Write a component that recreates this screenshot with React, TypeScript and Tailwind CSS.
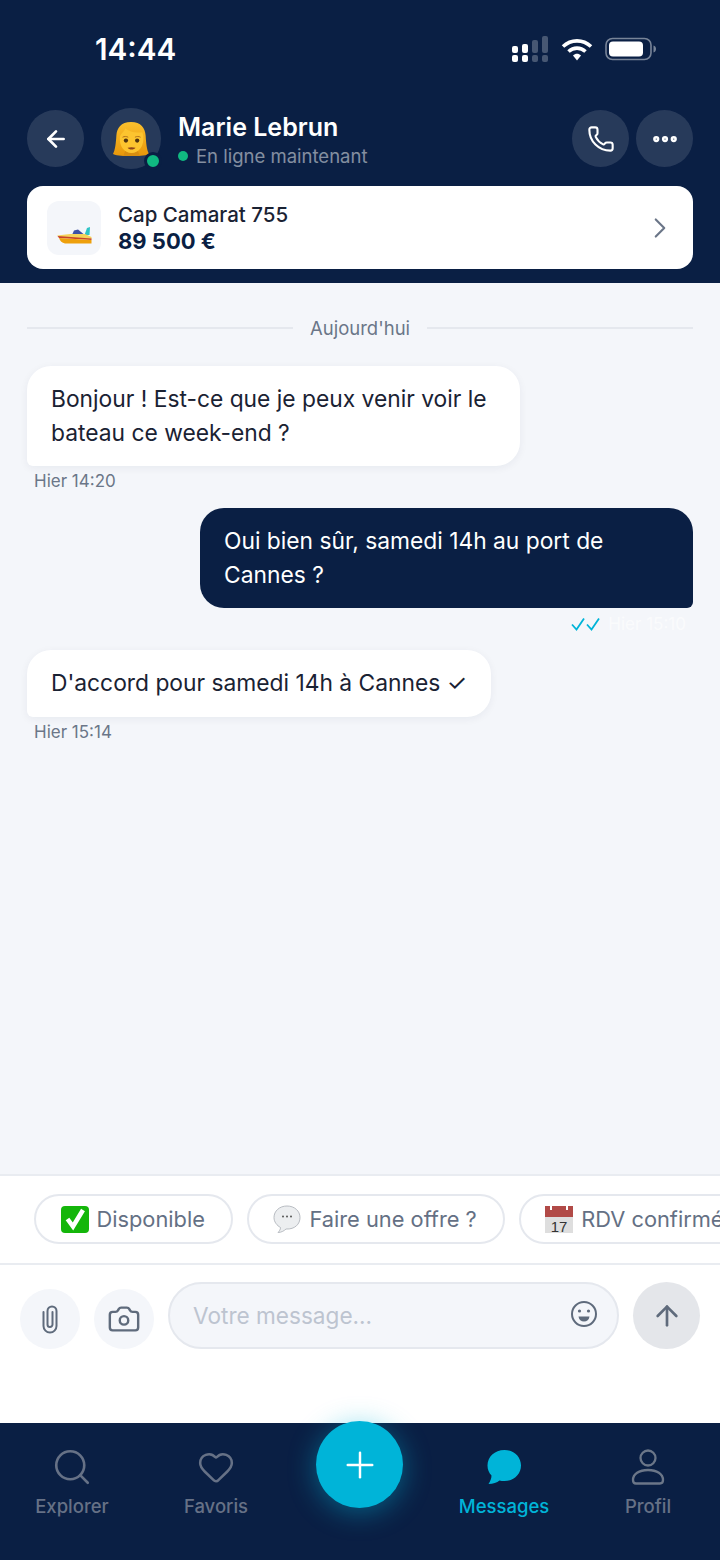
import { ArrowLeft, ArrowUp, Camera, ChevronRight, Ellipsis, Heart, Phone, Plus, Search } from "lucide-react";
import type { ReactNode } from "react";

function SignalIcon() {
  return (
    <svg width="37" height="26" viewBox="0 0 37 26" fill="#fff">
      <rect x="0" y="10" width="6" height="7" rx="2" />
      <rect x="0" y="19" width="6" height="7" rx="2" />
      <rect x="10" y="8" width="6" height="9" rx="2" />
      <rect x="10" y="19" width="6" height="7" rx="2" />
      <rect x="20" y="4" width="6" height="13" rx="2" opacity="0.25" />
      <rect x="20" y="19" width="6" height="7" rx="2" opacity="0.25" />
      <rect x="30" y="0" width="6" height="17" rx="2" opacity="0.25" />
      <rect x="30" y="19" width="6" height="7" rx="2" opacity="0.25" />
    </svg>
  );
}

function WifiIcon() {
  return (
    <svg width="32" height="24" viewBox="0 0 32 24" fill="none" stroke="#fff" strokeWidth="3.6">
      <path d="M2 9.500C10 2 22 2 30 9.500" />
      <path d="M7.500 14.500C12.500 10 19.500 10 24.500 14.500" />
      <path d="M12 18.400C14.400 16.200 17.600 16.200 20 18.400L16 23.500Z" fill="#fff" stroke="none" />
    </svg>
  );
}

function BatteryIcon() {
  return (
    <svg width="52" height="24" viewBox="0 0 52 24" fill="none">
      <rect x="1" y="1.500" width="45" height="21" rx="6.500" stroke="#fff" strokeOpacity="0.45" strokeWidth="1.600" />
      <rect x="4" y="4.500" width="34" height="15" rx="4" fill="#fff" />
      <path d="M48.500 8.500c1.600.4 2.500 1.800 2.500 3.500s-.9 3.100-2.500 3.500Z" fill="#fff" fillOpacity="0.45" />
    </svg>
  );
}

function WomanEmoji() {
  return (
    <svg width="36" height="34" viewBox="0 0 32 33" preserveAspectRatio="none">
      <defs>
        <linearGradient id="hair" x1="0" y1="0" x2="0" y2="1">
          <stop offset="0" stopColor="#fbc02d" />
          <stop offset="1" stopColor="#e8970a" />
        </linearGradient>
      </defs>
      <path d="M16 0C7 0 3.500 6 3 13 2.600 20 2 27 0 31 4 33 10 33 16 33S28 33 32 31C30 27 29.400 20 29 13 28.500 6 25 0 16 0Z" fill="url(#hair)" />
      <path d="M11 28H22L24 33H9Z" fill="#d98e10" />
      <path d="M6 16C6 24 10 30 16.500 30S27 24 27 16C27 13 26.500 11 26 10 20 11 14 9 11 6 10 10 6 11 6 16Z" fill="#fdc42f" />
      <path d="M8.500 14.800C10 13.800 12 13.800 13.500 14.800M19.500 14.800C21 13.800 23 13.800 24.500 14.800" fill="none" stroke="#a8661a" strokeWidth="0.800" />
      <ellipse cx="11.500" cy="18" rx="1.900" ry="2.100" fill="#4f3310" />
      <ellipse cx="21.500" cy="18" rx="1.900" ry="2.100" fill="#4f3310" />
      <path d="M13 25C15 24.300 18 24.300 20 25 19 27.300 14 27.300 13 25Z" fill="#8f4419" />
    </svg>
  );
}

function BoatEmoji() {
  return (
    <svg width="35" height="17" viewBox="0 0 35 17">
      <path d="M27.500 8L30 1 33 0 32.500 8Z" fill="#2fc4c6" />
      <path d="M15 8L17 3.500 21 2.500 26.500 7 27 8Z" fill="#3d51a6" />
      <path d="M0 8.500L13 7H28L34.500 10V12L3 10.500Z" fill="#f5d35a" />
      <path d="M0.500 9L34.500 11.500V13L2 11Z" fill="#c8442b" />
      <path d="M2 11L34.500 13V16.500H8C5 16 3 14 2 11Z" fill="#eea00c" />
    </svg>
  );
}

function CheckEmoji() {
  return (
    <svg width="28" height="27" viewBox="0 0 28 27" className="shrink-0">
      <rect width="28" height="27" rx="4" fill="#14b60a" />
      <path d="M6.500 13L12 20.500 22 4" fill="none" stroke="#fff" strokeWidth="4.500" />
    </svg>
  );
}

function BubbleEmoji() {
  return (
    <svg width="28" height="28" viewBox="0 0 28 28" className="shrink-0">
      <path d="M14 1C6.500 1 1 6 1 12.500 1 17 4 20.500 7.500 22.500 7.500 24.500 6.500 26 5 27.500 8.500 27.500 11.500 25.500 13 24 22 24.500 27 19 27 12.500 27 6 21.500 1 14 1Z" fill="#eceef0" stroke="#b8bcc2" strokeWidth="1" />
      <circle cx="10" cy="11.500" r="1" fill="#555" />
      <circle cx="14" cy="11.500" r="1" fill="#555" />
      <circle cx="18" cy="11.500" r="1" fill="#555" />
    </svg>
  );
}

function CalendarEmoji() {
  return (
    <svg width="28" height="28" viewBox="0 0 28 28" className="shrink-0">
      <rect y="1" width="28" height="27" fill="#dedede" />
      <rect y="1" width="28" height="11" fill="#b14a47" />
      <rect x="5" y="0" width="2" height="5" fill="#fff" />
      <rect x="21" y="0" width="2" height="5" fill="#fff" />
      <text x="14" y="26.500" textAnchor="middle" fontSize="15" fill="#333" fontFamily="Liberation Sans, sans-serif">17</text>
    </svg>
  );
}

function ClipIcon() {
  return (
    <svg width="16" height="29" viewBox="0 0 16 29" fill="none" stroke="#5f6b7c" strokeWidth="2" strokeLinecap="round">
      <path d="M10.500 7V19.500A2.500 2.500 0 0 1 5.500 19.500V6A4.500 4.500 0 0 1 14.500 6V21A6.500 6.500 0 0 1 1.500 21V7" />
    </svg>
  );
}

function SmileIcon() {
  return (
    <svg width="28" height="28" viewBox="0 0 28 28" fill="none" stroke="#5f6b7c" strokeWidth="2">
      <circle cx="14" cy="14" r="12" />
      <circle cx="9.500" cy="11" r="1.600" fill="#5f6b7c" stroke="none" />
      <circle cx="18.500" cy="11" r="1.600" fill="#5f6b7c" stroke="none" />
      <path d="M8.500 16.500H19.500C19 20 17 21.500 14 21.500S9 20 8.500 16.500Z" fill="#5f6b7c" stroke="none" />
    </svg>
  );
}

function MessagesIcon() {
  return (
    <svg width="36" height="36" viewBox="0 0 36 36" fill="#00b4d8">
      <path d="M18.500 1C8.500 1 1.500 8 1.500 16.500 1.500 20.500 3 24 5.500 26.500 5.500 29 4.500 32 2.500 35 7 35 11 33.500 13.500 31.500 15 32 16.500 32 18.500 32 28 32 35 25 35 16.500S28 1 18.500 1Z" />
    </svg>
  );
}

function ProfileIcon() {
  return (
    <svg width="34" height="36" viewBox="0 0 34 36" fill="none" stroke="#6b7688" strokeWidth="2.300">
      <ellipse cx="17" cy="9" rx="7.500" ry="7.500" />
      <path d="M2 31C2 25 8 21 17 21S32 25 32 31C32 33.500 31 34.500 29 34.500H5C3 34.500 2 33.500 2 31Z" />
    </svg>
  );
}

function RoundButton({ children, className }: { children: ReactNode; className: string }) {
  return <div className={`flex items-center justify-center rounded-full shrink-0 ${className}`}>{children}</div>;
}

function Chip({ icon, label }: { icon: ReactNode; label: string }) {
  return (
    <div className="flex h-[50px] shrink-0 items-center gap-[8px] rounded-full border-[2.5px] border-[#e5e8ee] bg-white pr-[26px] pl-[24.5px] text-[21.8px] whitespace-nowrap text-[#647084]">
      {icon}
      <span>{label}</span>
    </div>
  );
}

function NavItem({ icon, label, active }: { icon: ReactNode; label: string; active?: boolean }) {
  return (
    <div className="flex w-[144px] flex-col items-center gap-[9px]">
      <div className="flex h-[36px] items-center justify-center">{icon}</div>
      <span className={`text-[18.5px] leading-[24px] font-medium ${active ? "text-[#00b4d8]" : "text-[#667186]"}`}>{label}</span>
    </div>
  );
}

export default function App() {
  return (
    <div className="relative flex h-[1560px] w-[720px] flex-col overflow-hidden bg-[#f4f6fa] font-['Inter',sans-serif]">
      {/* Header */}
      <header className="h-[283px] shrink-0 bg-[#0a1f44] px-[27px]">
        <div className="flex h-[110px] items-start justify-between pt-[31px]">
          <span className="pl-[68px] text-[29.7px] leading-[36px] font-semibold text-white">14:44</span>
          <div className="flex items-center gap-[12px] pt-[5px] pr-[36px]">
            <SignalIcon />
            <WifiIcon />
            <BatteryIcon />
          </div>
        </div>
        <div className="flex h-[57px] items-center">
          <RoundButton className="h-[57px] w-[57px] bg-white/12">
            <ArrowLeft size={26} color="#fff" strokeWidth={2.500} />
          </RoundButton>
          <div className="relative ml-[17px]">
            <RoundButton className="h-[61px] w-[60px] bg-white/12">
              <WomanEmoji />
            </RoundButton>
            <span className="absolute right-[-1px] bottom-[-1px] h-[18px] w-[18px] rounded-full border-[3px] border-[#0a1f44] bg-[#10b981]" />
          </div>
          <div className="ml-[17px] flex-1 pt-[1px]">
            <div className="text-[25px] leading-[32px] font-semibold text-white">Marie Lebrun</div>
            <div className="mt-[1px] flex items-center gap-[8px] text-[18.5px] leading-[24px] text-white/50">
              <span className="h-[10px] w-[10px] rounded-full bg-[#10b981]" />
              En ligne maintenant
            </div>
          </div>
          <RoundButton className="h-[57px] w-[57px] bg-white/12">
            <Phone size={28} color="#fff" strokeWidth={1.800} />
          </RoundButton>
          <RoundButton className="ml-[7px] h-[57px] w-[57px] bg-white/12">
            <Ellipsis size={30} color="#fff" strokeWidth={3} />
          </RoundButton>
        </div>
        <div className="mt-[19px] flex h-[83px] items-center rounded-[16px] bg-white pr-[16px] pl-[20px]">
          <div className="flex h-[54px] w-[54px] items-end justify-center rounded-[12px] bg-[#f4f6fa] pb-[11px]">
            <BoatEmoji />
          </div>
          <div className="ml-[17px] flex-1 pt-[1px]">
            <div className="text-[20.5px] leading-[26px] font-medium text-[#1a2233]">Cap Camarat 755</div>
            <div className="text-[22px] leading-[27px] font-bold text-[#0a1f44]">89 500 €</div>
          </div>
          <ChevronRight size={34} color="#6b7688" strokeWidth={1.500} />
        </div>
      </header>

      {/* Messages */}
      <main className="flex min-h-0 flex-1 flex-col px-[27px] pt-[33px]">
        <div className="flex h-[24px] items-center gap-[17px]">
          <div className="h-[2px] flex-1 bg-[#e5e8ee]" />
          <span className="text-[18.5px] leading-[24px] text-[#6b7688]">Aujourd'hui</span>
          <div className="h-[2px] flex-1 bg-[#e5e8ee]" />
        </div>

        <div className="mt-[26px] w-[493px] rounded-[24px] rounded-bl-[6px] bg-white px-[24px] py-[16px] text-[22.8px] leading-[34px] text-[#1a2233] shadow-[0_2px_8px_rgba(10,31,68,0.06)]">
          Bonjour ! Est-ce que je peux venir voir le bateau ce week-end ?
        </div>
        <div className="mt-[4px] pl-[7px] text-[17px] leading-[22px] text-[#6b7688]">Hier 14:20</div>

        <div className="mt-[16px] w-[493px] self-end rounded-[24px] rounded-br-[6px] bg-[#0a1f44] px-[24px] py-[16px] text-[22.8px] leading-[34px] text-white">
          Oui bien sûr, samedi 14h au port de Cannes ?
        </div>
        <div className="mt-[5px] flex items-center justify-end gap-[8px] pr-[7px] text-[17px] leading-[22px] text-white/60">
          <svg width="29" height="14" viewBox="0 0 29 14" fill="none" stroke="#00b4d8" strokeWidth="1.800">
            <path d="M1 7.500L5.500 12.500 13 1.500" />
            <path d="M16 7.500L20.500 12.500 28 1.500" />
          </svg>
          <span>Hier 15:10</span>
        </div>

        <div className="mt-[15px] w-fit rounded-[24px] rounded-bl-[6px] bg-white px-[24px] pt-[16px] pb-[17px] text-[22.8px] leading-[34px] text-[#1a2233] shadow-[0_2px_8px_rgba(10,31,68,0.06)]">
          D'accord pour samedi 14h à Cannes ✓
        </div>
        <div className="mt-[4px] pl-[7px] text-[17px] leading-[22px] text-[#6b7688]">Hier 15:14</div>
      </main>

      {/* Quick replies */}
      <div className="flex h-[91px] shrink-0 items-center gap-[14px] overflow-hidden border-y-2 border-[#e9ecf1] bg-white pb-[1px] pl-[34px]">
        <Chip icon={<CheckEmoji />} label="Disponible" />
        <Chip icon={<BubbleEmoji />} label="Faire une offre ?" />
        <Chip icon={<CalendarEmoji />} label="RDV confirmé" />
      </div>

      {/* Composer */}
      <div className="flex h-[158px] shrink-0 items-start gap-[14px] bg-white px-[20px] pt-[17px]">
        <RoundButton className="mt-[7px] h-[60px] w-[60px] bg-[#f4f6fa]">
          <ClipIcon />
        </RoundButton>
        <RoundButton className="mt-[7px] h-[60px] w-[60px] bg-[#f4f6fa]">
          <Camera size={34} color="#5f6b7c" strokeWidth={1.700} />
        </RoundButton>
        <div className="flex h-[67px] flex-1 items-center justify-between rounded-full border-2 border-[#e5e8ee] bg-[#f4f6fa] pr-[19px] pl-[23px]">
          <span className="text-[22.6px] text-[#bdc4d0]">Votre message...</span>
          <div className="-mt-[3px]">
            <SmileIcon />
          </div>
        </div>
        <RoundButton className="h-[67px] w-[67px] bg-[#e4e6ea]">
          <ArrowUp size={32} color="#5f6b7c" strokeWidth={2} />
        </RoundButton>
      </div>

      {/* Bottom nav */}
      <nav className="relative flex h-[137px] shrink-0 items-start justify-between bg-[#0a1f44] pt-[26px]">
        <NavItem icon={<Search size={42} color="#667186" strokeWidth={1.500} />} label="Explorer" />
        <NavItem icon={<Heart size={38} color="#667186" strokeWidth={1.600} />} label="Favoris" />
        <div className="w-[144px]" />
        <NavItem icon={<MessagesIcon />} label="Messages" active />
        <NavItem icon={<ProfileIcon />} label="Profil" />
        <div className="absolute top-[-2px] left-[316px] flex h-[87px] w-[87px] items-center justify-center rounded-full bg-[#00b4d8] shadow-[0_4px_28px_rgba(0,180,216,0.45)]">
          <Plus size={42} color="#fff" strokeWidth={1.400} />
        </div>
      </nav>
    </div>
  );
}
